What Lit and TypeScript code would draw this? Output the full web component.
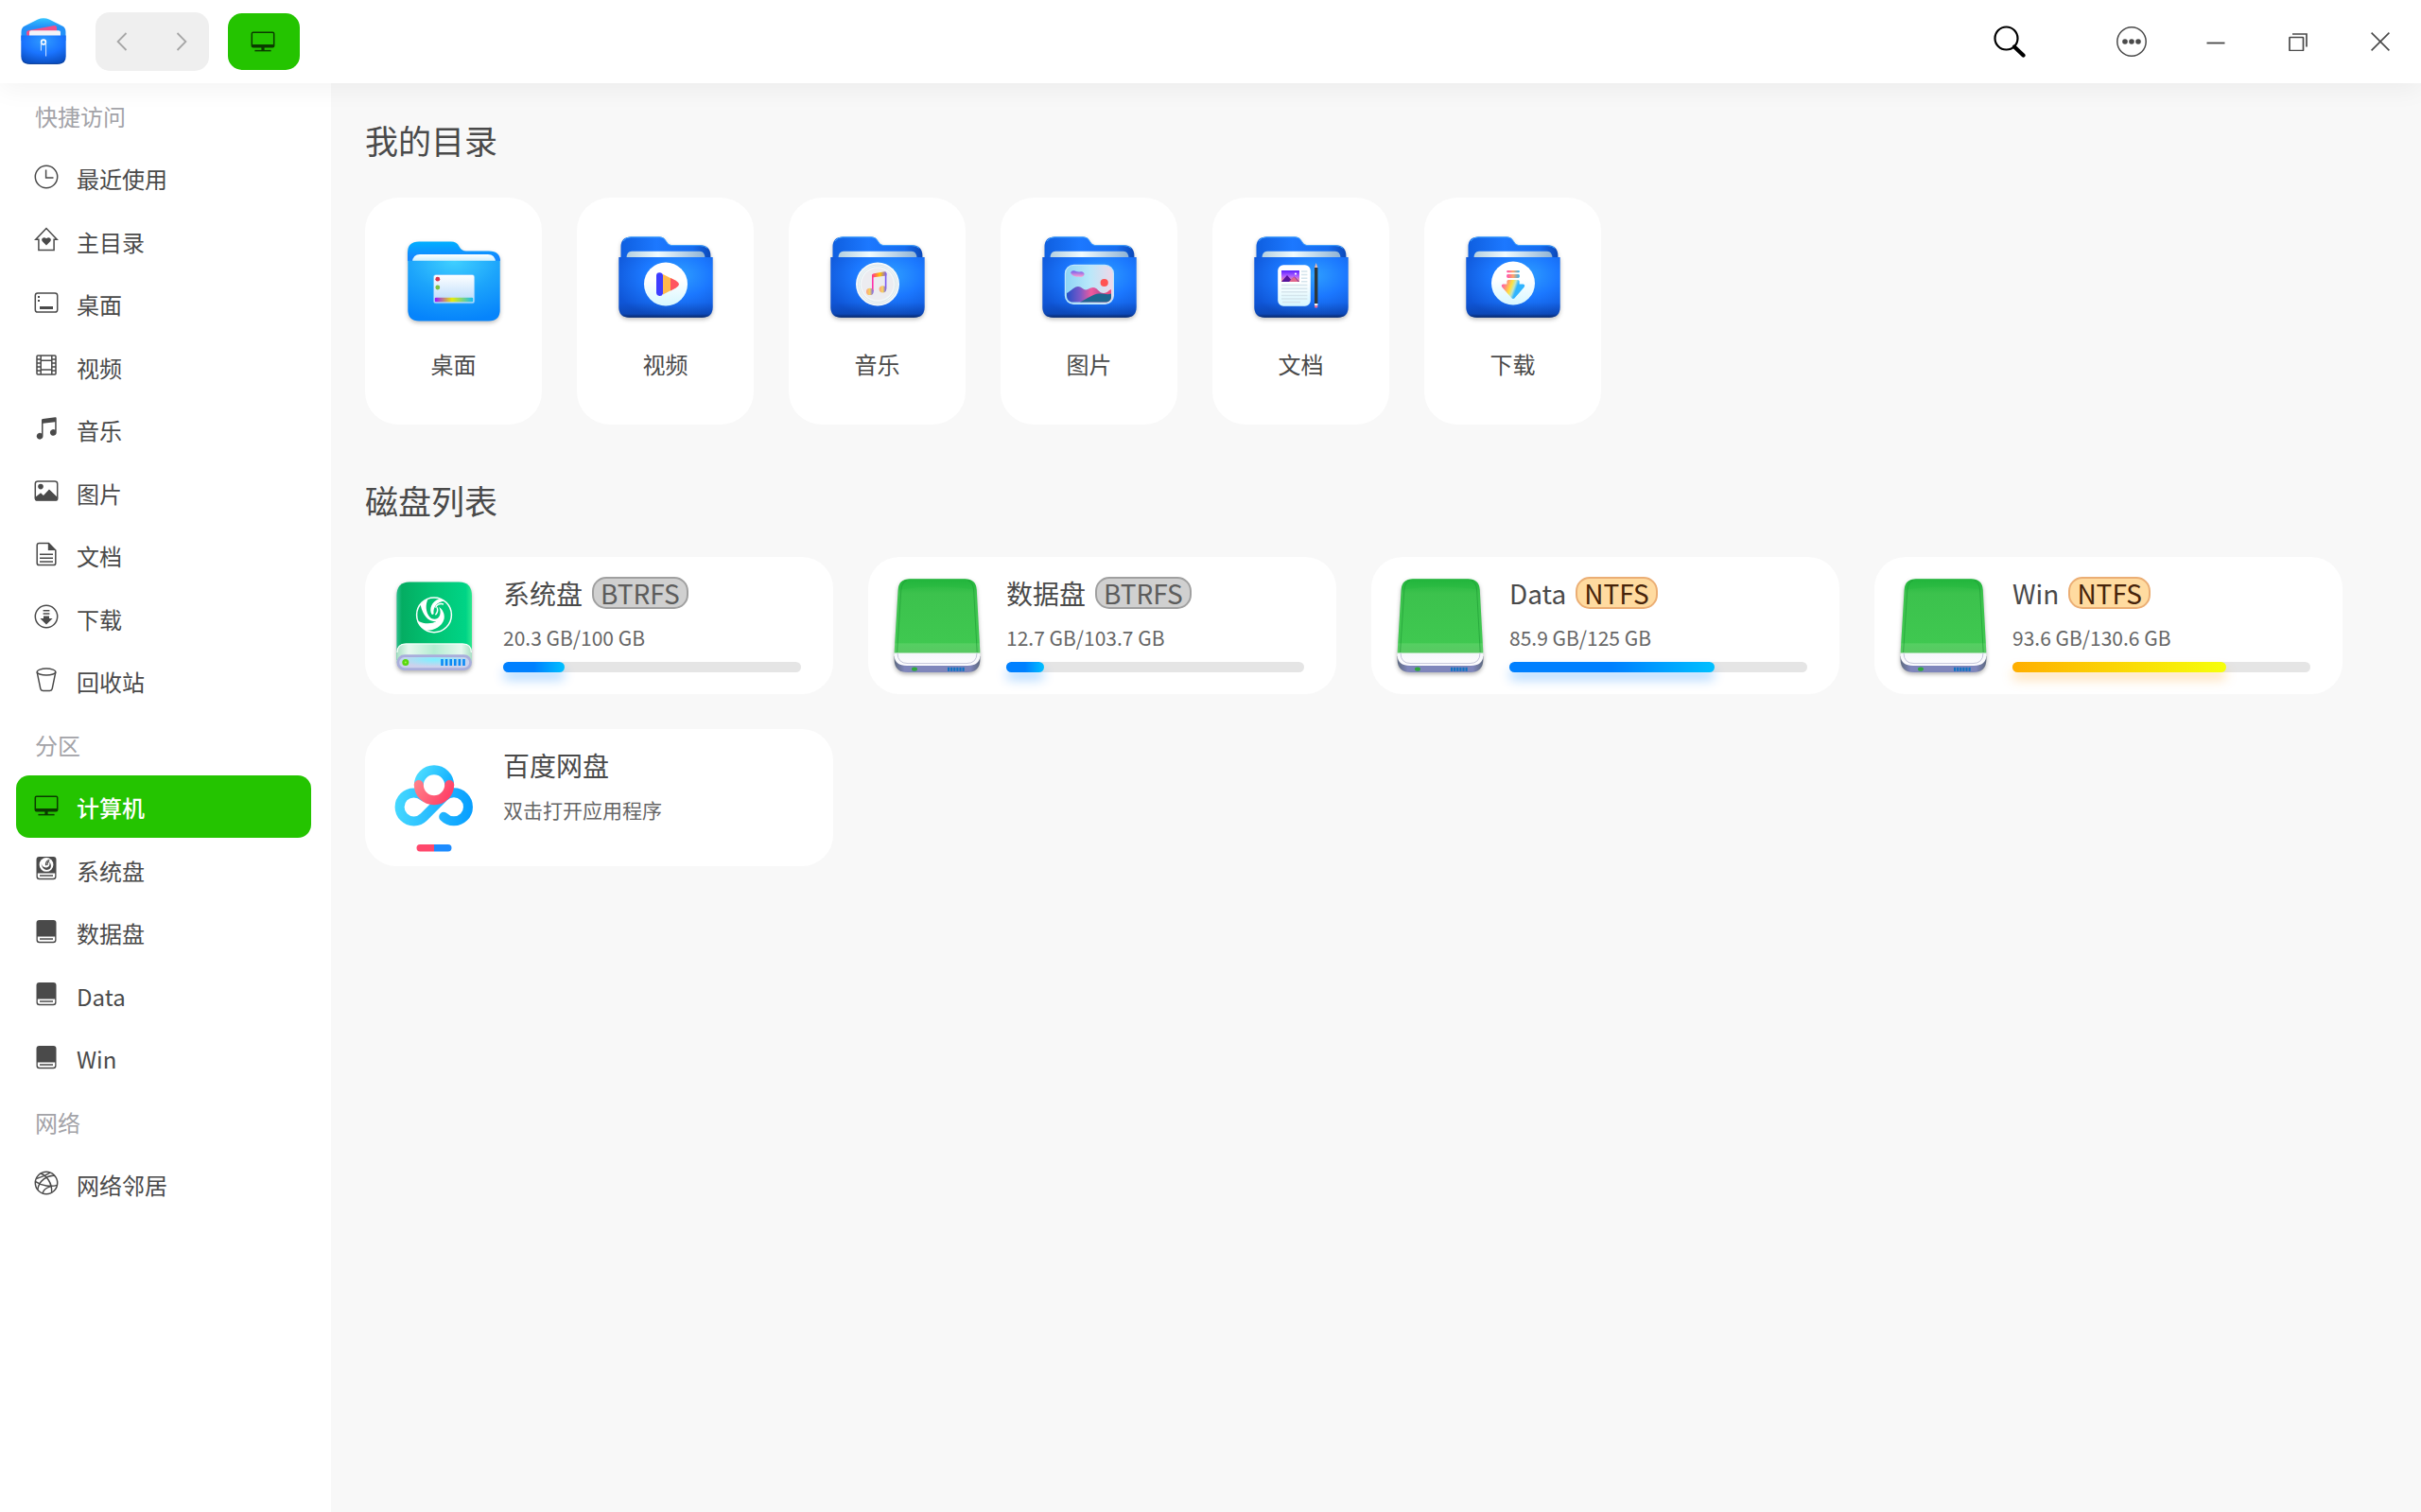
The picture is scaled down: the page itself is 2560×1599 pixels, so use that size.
import { LitElement, html, svg, css, nothing } from "lit";
import { customElement, property } from "lit/decorators.js";
import { classMap } from "lit/directives/class-map.js";
import { styleMap } from "lit/directives/style-map.js";

/* ---------- Line glyphs for the sidebar, on a 26 unit grid ---------- */

const swirl = svg`
  <path d="M6.6 6.2C6.8 10.6 9.6 13 12.4 12.8 15.4 12.6 16.6 9.6 15.6 6.8 18 9.6 18 13.4 14.8 15 11.6 16.4 7.4 14.6 6.6 6.2Z" fill="currentColor"/>
  <path d="M12.2 10.6C11.2 8.4 12.4 5.4 15.8 4.6M13.4 10.4C13.2 8.6 13.8 7 15.4 6.2" fill="none" stroke="currentColor" stroke-width="1.1"/>`;

const driveBody = svg`
  <path d="M5.5 1h15a3 3 0 0 1 3 3v18.2a3 3 0 0 1-3 3h-15a3 3 0 0 1-3-3V4a3 3 0 0 1 3-3Z" fill="currentColor"/>
  <path d="M3.8 18.4h18.4v3.4a2 2 0 0 1-2 2H5.8a2 2 0 0 1-2-2Z" fill="#fff"/>
  <path d="M6 21h14" stroke="currentColor" stroke-width="1.5"/>`;

const glyphs: Record<string, unknown> = {
  recent: svg`<circle cx="13" cy="13" r="11.7"/><path d="M12.6 5.5V14H20.5"/>`,
  home: svg`<path d="M13 1.6 1.8 13.2H4.9V24.6H21.1V13.2H24.2Z"/>
    <path d="M13 19.4 8.8 15.2C6.6 12.6 10.2 9.6 13 12.2 15.8 9.6 19.4 12.6 17.2 15.2Z" fill="currentColor" stroke="none"/>`,
  desktop: svg`<rect x="1.3" y="3" width="23.4" height="20" rx="2.6"/>
    <path d="M4 6h2v2H4ZM4 10h2v2H4ZM6 17h14v3H6Z" fill="currentColor" stroke="none"/>`,
  video: svg`<rect x="3" y="3" width="20" height="20" rx="1"/>
    <path d="M7.2 3V23M18.8 3V23M7.2 8.2H18.8M7.2 18H18.8M3 7H7.2M3 11H7.2M3 15H7.2M3 19H7.2M18.8 7H23M18.8 11H23M18.8 15H23M18.8 19H23"/>`,
  music: svg`<path d="M8 4.2C8 3.4 8.4 3 9.2 2.9L22.4 1.3C23.2 1.2 23.7 1.6 23.7 2.4V17.4A3.4 3.4 0 1 1 22.2 14.6V6.2L9.5 7.7V21.2A3.4 3.4 0 1 1 8 18.4Z" fill="currentColor" stroke="none"/>`,
  picture: svg`<rect x="1.3" y="3" width="23.4" height="20" rx="2.6"/>
    <circle cx="7" cy="8.6" r="2.8" fill="currentColor" stroke="none"/>
    <path d="M1.6 20.5 7 16.2 10 19 16 12.6 24.4 20.5V22.6H2Z" fill="currentColor"/>`,
  document: svg`<path d="M15.5 1.6H5.4A2.2 2.2 0 0 0 3.2 3.8V22.4A2.2 2.2 0 0 0 5.4 24.6H20.6A2.2 2.2 0 0 0 22.8 22.4V9Z"/>
    <path d="M14.8 1V9H23.4Z" fill="currentColor" stroke="none"/><path d="M6 13.2H20M6 17.2H20M6 21H20"/>`,
  download: svg`<circle cx="13" cy="13" r="11.7"/><path d="M9.6 6.8H16.4M9.6 10H16.4"/>
    <path d="M10 12.4H16V15H19.6L13 21.4 6.4 15H10Z" fill="currentColor" stroke="none"/>`,
  trash: svg`<ellipse cx="13" cy="4.6" rx="9.8" ry="3.5"/><path d="M3.2 4.8 6.8 22.4Q7.2 24.4 9.4 24.4H16.6Q18.8 24.4 19.2 22.4L22.8 4.8"/>`,
  computer: svg`<rect x="1.3" y="3.2" width="23.4" height="15.6" rx="1.4"/>
    <path d="M1 16H25V18.6H1ZM11.4 19H14.6V22H11.4Z" fill="currentColor" stroke="none"/><path d="M4.4 22.6H21.6"/>`,
  system: svg`<g stroke="none">${driveBody}</g><circle cx="13" cy="9.4" r="7.4" fill="#fff" stroke="none"/>
    <g stroke="none" transform="translate(.6 -.4)">${swirl}</g>`,
  drive: svg`<g stroke="none">${driveBody}</g>`,
  network: svg`<circle cx="13" cy="13" r="11.7"/>
    <path d="M7 3C13 5 19.4 13 18.6 23.2M1.6 11.6C8 16 18 17.4 24.4 15.4M22 5.4C14 4.4 5 11 3.8 20M3 8.4 11 5.4 17 2.2M9 24C9.6 21 13 18 17.6 16.6"/>`,
};

@customElement("line-glyph")
export class LineGlyph extends LitElement {
  @property() name = "";

  static styles = css`
    :host {
      display: block;
      width: 26px;
      height: 26px;
    }
    .art {
      display: block;
      width: 100%;
      height: 100%;
      overflow: visible;
    }
  `;

  render() {
    return html`<svg class="art" viewBox="0 0 26 26" fill="none" stroke="currentColor" stroke-width="1.500" aria-hidden="true">${glyphs[this.name]}</svg>`;
  }
}

/* ---------- Folder artwork, on a 112 unit grid ---------- */

const emblems: Record<string, unknown> = {
  video: svg`
    <circle cx="50" cy="50.4" r="23" fill="url(#disc)"/>
    <path d="M47 40 60.4 46.8Q64.4 50.4 60.4 54.6L47 61.4Z" fill="#ffb84d"/>
    <path d="M55 44 60.6 46.8Q67.4 50.6 60.6 54.6L55 57.4Z" fill="#ff5560"/>
    <path d="M43.4 38.2A3.6 3.6 0 0 1 47 41V60.4A3.6 3.6 0 0 1 40 59.8V41.6A3.4 3.4 0 0 1 43.4 38.2Z" fill="#3d3dff"/>`,
  music: svg`
    <circle cx="50" cy="50.6" r="23" fill="#f3f8fa"/>
    <circle cx="50" cy="50.6" r="20.6" fill="none" stroke="#cfdde2" stroke-width=".7"/>
    <circle cx="50" cy="50.6" r="18.8" fill="none" stroke="#cfdde2" stroke-width=".7"/>
    <circle cx="50" cy="50.6" r="17" fill="#ececf0"/>
    <path d="M44.8 58V40.5" stroke="#ff2fa8" stroke-width="1.6"/>
    <path d="M58.6 55.4V39" stroke="#7a5cf5" stroke-width="1.6"/>
    <path d="M44 41.6Q44 39.8 46 39.3L57.4 37.2Q59.4 37 59.4 39V41.4L44 43.6Z" fill="url(#beam)"/>
    <ellipse cx="41.8" cy="58.4" rx="3.8" ry="3.6" fill="url(#note)"/>
    <ellipse cx="55.4" cy="55.8" rx="3.8" ry="3.6" fill="url(#note)"/>`,
  picture: svg`
    <rect x="24.4" y="30.4" width="51" height="41" rx="9" fill="url(#sky)" stroke="#bfe6fb" stroke-width="1.2"/>
    <path d="M30 38.6Q31 35.4 34.6 36.4 38 38 41 37.2 44.6 37.6 44.6 40.2 43.6 43.4 38 42.6 32 43 30 38.6Z" fill="url(#cloud)"/>
    <circle cx="65.7" cy="49" r="4.1" fill="#ff5252"/>
    <path d="M26 60C30 58 34 53 38 53S44 58 48 56 54 53 57 55 61 60 65 60 70 57 73 56V65Q72 69 68 69.4H31Q26 68 26 63Z" fill="url(#hills)"/>
    <path d="M40 69.4C48 66 54 60.5 60 60.5S69 62 73 60.5V65Q72 69 68 69.4Z" fill="#1e6790"/>`,
  document: svg`
    <rect x="25.2" y="30.2" width="34.6" height="43.6" rx="6" fill="url(#disc)"/>
    <path d="M50 37H56.4M50 40.6H56.4M50 44.2H56.4M50 47.8H56.4M29 51.6H56.4M29 55.2H56.4M29 58.8H56.4M29 62.4H56.4M29 66H56.4M30 69.4H49" stroke="#d4e4ec" stroke-width="1.5"/>
    <rect x="29" y="36" width="19" height="12" fill="url(#dusk)"/>
    <path d="M29 48 35 41 39.4 46 42.6 42.6 48 48Z" fill="#57129c"/>
    <path d="M37 48 42.4 42.6 47 48Z" fill="#e0678d"/>
    <circle cx="44" cy="39.6" r="1.1" fill="#fff"/>
    <path d="M64 33 65.7 28 67.4 33Z" fill="#f2b8a6"/>
    <rect x="64" y="33" width="3.4" height="38" fill="#2e3638"/>
    <rect x="64" y="71" width="3.4" height="2" fill="#f1f1f1"/>
    <rect x="64" y="73" width="3.4" height="2.4" rx=".8" fill="#ee6f9c"/>`,
  download: svg`
    <circle cx="50" cy="49.6" r="23" fill="url(#disc)"/>
    <rect x="43.2" y="36" width="13.6" height="2.2" rx="1" fill="url(#candy)"/>
    <rect x="43.2" y="40" width="13.6" height="4" rx="1.4" fill="url(#candy)"/>
    <path d="M43.4 47.6Q43.4 46 45 46H55Q56.6 46 56.6 47.6V50.6H60.6Q63.4 51.4 61.4 54L51.6 65.2Q50 66.6 48.4 65.2L38.6 54Q36.6 51.4 39.4 50.6H43.4Z" fill="url(#arrow)"/>`,
};

@customElement("folder-art")
export class FolderArt extends LitElement {
  @property() kind = "";

  static styles = css`
    :host {
      display: block;
      width: 112px;
      height: 112px;
    }
    .art {
      display: block;
      width: 100%;
      height: 100%;
      overflow: visible;
      filter: drop-shadow(0 2px 2px rgba(0, 0, 0, 0.25));
    }
  `;

  private desktopFolder() {
    return svg`
      <defs>
        <linearGradient id="back" x2="0" y2="1"><stop stop-color="#00b0ff"/><stop offset=".8" stop-color="#1488ff"/></linearGradient>
        <radialGradient id="front" cx=".5" cy="0" r="1"><stop stop-color="#40d0ff"/><stop offset=".5" stop-color="#1ca4fb"/><stop offset="1" stop-color="#0684fb"/></radialGradient>
        <linearGradient id="paper" x2="0" y2="1"><stop stop-color="#fff"/><stop offset="1" stop-color="#c6ecfd"/></linearGradient>
        <linearGradient id="screen" x2="0" y2="1"><stop stop-color="#fff"/><stop offset="1" stop-color="#b5d9fb"/></linearGradient>
        <linearGradient id="rainbow"><stop stop-color="#9a14ff"/><stop offset=".45" stop-color="#e6ec0a"/><stop offset="1" stop-color="#12bdf5"/></linearGradient>
      </defs>
      <g transform="translate(7 15)">
        <path d="M0 21V12Q0 .4 12 .4H46Q52 .4 54.4 5.4 57 10.4 62 10.4H86Q98 10.4 98 21Z" fill="url(#back)"/>
        <path d="M5 22Q5.6 14 13 14H85Q92.4 14 93 22Z" fill="url(#paper)"/>
        <path d="M.3 20.8H97.7V72.4Q97.7 84.4 85.7 84.4H12.3Q.3 84.4 .3 72.4Z" fill="url(#front)"/>
        <rect x="27.4" y="35.4" width="43.4" height="30.4" rx="2.6" fill="url(#screen)" stroke="#5ab8fb" stroke-width=".6"/>
        <circle cx="31.8" cy="40.2" r="2.4" fill="#d8344f"/>
        <circle cx="31.8" cy="49" r="2.4" fill="#7cc043"/>
        <rect x="28.8" y="59.8" width="40.4" height="4.4" rx="1" fill="url(#rainbow)"/>
      </g>`;
  }

  private emblemFolder() {
    return svg`
      <defs>
        <linearGradient id="back"><stop stop-color="#0f5fe0"/><stop offset=".4" stop-color="#1c78ff"/><stop offset=".8" stop-color="#166cf0"/><stop offset="1" stop-color="#0b48b8"/></linearGradient>
        <radialGradient id="front" cx=".62" cy=".3" r=".72"><stop stop-color="#2fa0ff"/><stop offset=".5" stop-color="#1b78ff"/><stop offset="1" stop-color="#0f55d6"/></radialGradient>
        <linearGradient id="foot" x2="0" y2="1"><stop offset=".75" stop-color="#06286e" stop-opacity="0"/><stop offset=".94" stop-color="#06286e" stop-opacity=".3"/><stop offset="1" stop-color="#041a4a" stop-opacity=".85"/></linearGradient>
        <linearGradient id="paper"><stop stop-color="#b4cfdf"/><stop offset=".4" stop-color="#f0fbff"/><stop offset="1" stop-color="#8eb2d4"/></linearGradient>
        <linearGradient id="disc" x2="0" y2="1"><stop offset=".4" stop-color="#fff"/><stop offset="1" stop-color="#d6f7ff"/></linearGradient>
        <linearGradient id="beam"><stop stop-color="#ff2f92"/><stop offset=".55" stop-color="#ffc400"/><stop offset="1" stop-color="#7a5cf5"/></linearGradient>
        <linearGradient id="note"><stop stop-color="#ff9f80"/><stop offset=".5" stop-color="#f6d560"/><stop offset="1" stop-color="#6a58f0"/></linearGradient>
        <linearGradient id="sky"><stop stop-color="#8ed4f5"/><stop offset=".5" stop-color="#b8e8fa"/><stop offset="1" stop-color="#f0d8e8"/></linearGradient>
        <linearGradient id="cloud" x2="0" y2="1"><stop stop-color="#6a5af0"/><stop offset="1" stop-color="#ff9fd0"/></linearGradient>
        <linearGradient id="hills"><stop stop-color="#2350c8"/><stop offset=".3" stop-color="#7a58c8"/><stop offset=".55" stop-color="#f05a9c"/><stop offset=".75" stop-color="#c04c94"/><stop offset="1" stop-color="#f0507c"/></linearGradient>
        <linearGradient id="dusk" x2="0" y2="1"><stop stop-color="#5a20ff"/><stop offset=".5" stop-color="#b060ff"/><stop offset="1" stop-color="#ff9f80"/></linearGradient>
        <linearGradient id="candy"><stop stop-color="#ff4fb0"/><stop offset=".5" stop-color="#ffa56a"/><stop offset="1" stop-color="#30b0f0"/></linearGradient>
        <linearGradient id="arrow" y2=".3"><stop offset=".1" stop-color="#ff5fa8"/><stop offset=".28" stop-color="#ff9a70"/><stop offset=".46" stop-color="#ffe23d"/><stop offset=".6" stop-color="#bfe6c8"/><stop offset=".72" stop-color="#2fb4ff"/></linearGradient>
      </defs>
      <g transform="translate(6 10)">
        <path d="M2.5 30V11Q2.5 .4 13 .4H43.5Q48 .4 50 4.4 52.4 9.2 56 9.2H86Q97 9.2 97.4 20V30Z" fill="url(#back)"/>
        <path d="M5 5Q8 .8 13 .8H43.5Q48 .8 50 4.6 52.4 9.6 56 9.6H86Q91 9.6 94 12.4" fill="none" stroke="#3fa2ff" stroke-width="1"/>
        <path d="M8.4 23Q8.8 15.8 14 15.8H86Q91 15.8 91.6 23Z" fill="url(#paper)"/>
        <path d="M.3 22H99.7V74.5Q99.7 85.8 88.4 85.8H11.6Q.3 85.8 .3 74.5Z" fill="url(#front)"/>
        <path d="M.3 22H99.7V74.5Q99.7 85.8 88.4 85.8H11.6Q.3 85.8 .3 74.5Z" fill="url(#foot)"/>
        ${emblems[this.kind]}
      </g>`;
  }

  render() {
    return html`<svg class="art" viewBox="0 0 112 112" aria-hidden="true">
      ${this.kind === "desktop" ? this.desktopFolder() : this.emblemFolder()}
    </svg>`;
  }
}

/* ---------- Drive artwork, on a 112 unit grid ---------- */

@customElement("drive-art")
export class DriveArt extends LitElement {
  @property() kind = "";

  static styles = css`
    :host {
      display: block;
      width: 112px;
      height: 112px;
    }
    .art {
      display: block;
      width: 100%;
      height: 100%;
      overflow: visible;
    }
    .raised {
      filter: drop-shadow(0 2px 2px rgba(0, 0, 0, 0.3));
    }
  `;

  private system() {
    const vents = [0, 1, 2, 3, 4, 5];
    return svg`
      <defs>
        <linearGradient id="shell"><stop stop-color="#2abf8c"/><stop offset=".07" stop-color="#04ad62"/><stop offset=".5" stop-color="#02c474"/><stop offset=".92" stop-color="#00d486"/><stop offset="1" stop-color="#2ee88e"/></linearGradient>
        <linearGradient id="lip"><stop stop-color="#a8e0c4"/><stop offset=".16" stop-color="#e6f8ef"/><stop offset=".5" stop-color="#b4edd2"/><stop offset=".86" stop-color="#e6f8ef"/><stop offset="1" stop-color="#a8e0c4"/></linearGradient>
        <radialGradient id="tray" cy=".3"><stop stop-color="#7ff0ff"/><stop offset="1" stop-color="#ccd2ec"/></radialGradient>
      </defs>
      <g class="raised">
        <path d="M16.4 24Q16.4 9.4 30 9.4H82.4Q96 9.4 96 24V92H16.4Z" fill="url(#shell)"/>
        <path d="M16.4 95V84Q16.4 74.4 26.4 74.4H86Q96 74.4 96 84V95Z" fill="url(#lip)"/>
        <path d="M17 84Q17 75 26.4 75H86Q95.4 75 95.4 84" fill="none" stroke="#f4fff9" stroke-width="1.2"/>
        <rect x="17.8" y="87.600" width="76.800" height="14" rx="7" fill="url(#tray)" stroke="#a9aedb" stroke-width="2.800"/>
      </g>
      <circle cx="25.8" cy="94.4" r="3.5" fill="#58d80e"/>
      <circle cx="25.8" cy="94.4" r="1" fill="#a8f05a"/>
      ${vents.map((i) => svg`<rect x=${63.2 + i * 4.6} y="91" width="2.6" height="7" fill="#0a8af5"/>`)}
      <circle cx="56" cy="44.3" r="18.4" fill="none" stroke="#fff" stroke-width="1.5"/>
      <path d="M41.6 33.6C43.4 31.4 46.4 28.8 49.6 27.6 46.6 33.4 47 41.6 51.4 46.6 55 50.4 60.8 49.2 62.2 44.2 63 41.4 62.6 38.6 61.2 36 65.2 38.6 67.6 43.6 66.6 48.6 64.4 57 56 60.8 48.6 60.8 42.4 58.6 39.2 54 38.6 50.4 46 54.4 54 53.8 58.2 51 51.6 52.2 44.4 46.8 41.6 33.6Z" fill="#fff"/>
      <path d="M53.4 43.6C50.6 38 53 30.2 61.6 27.2L66.8 29.6C58.6 31 54.8 36.4 55.6 43 54.8 44 54 44.2 53.4 43.6Z" fill="#fff"/>
      <path d="M57.4 44.2C59.6 42 60 38.8 59.2 36.4M66 33C62 31.6 58.6 33.6 57.6 36.6" fill="none" stroke="#fff" stroke-width="1.4"/>`;
  }

  private external() {
    const vents = [0, 1, 2, 3, 4, 5];
    return svg`
      <defs>
        <linearGradient id="shell" x2="0" y2="1"><stop stop-color="#22b53c"/><stop offset=".2" stop-color="#3cc24d"/><stop offset=".86" stop-color="#3fc850"/><stop offset=".88" stop-color="#55cf62"/><stop offset="1" stop-color="#58c862"/></linearGradient>
        <linearGradient id="cap" x2="0" y2="1"><stop stop-color="#22b53c"/><stop offset="1" stop-color="#2fbd45"/></linearGradient>
        <linearGradient id="base"><stop stop-color="#5e6a80"/><stop offset=".12" stop-color="#7f86bb"/><stop offset=".88" stop-color="#7f86bb"/><stop offset="1" stop-color="#5e6a80"/></linearGradient>
        <linearGradient id="face" x2="0" y2="1"><stop stop-color="#f4f6fa"/><stop offset="1" stop-color="#fdfdff"/></linearGradient>
      </defs>
      <g class="raised">
        <path d="M10.6 88H101.4V92Q101 105 87 105H25Q11 105 10.6 92Z" fill="url(#base)"/>
        <path d="M10.6 83H101.4V87Q101 98 88 98H24Q11 98 10.6 87Z" fill="url(#face)"/>
        <path d="M10.6 84.4 14.6 18Q15.2 6.2 27 6.2H85.4Q97.2 6.2 97.8 18L101.4 84.4Z" fill="url(#shell)"/>
      </g>
      <path d="M15.2 18Q16 6.8 27 6.8H85.4Q96.4 6.8 97.2 18C70 13.4 42 13.4 15.2 18Z" fill="url(#cap)"/>
      <path d="M13.6 84 17.8 18Q18.4 10 24 7.6M98.2 84 94.6 18Q94 10 88.4 7.6" fill="none" stroke="#1d9a34" stroke-opacity=".6" stroke-width="1"/>
      <path d="M14 84.4Q14 95.6 25 95.6H87Q98 95.6 98 84.4" fill="none" stroke="#c4c6da" stroke-width="1"/>
      <ellipse cx="32" cy="101.6" rx="3" ry="2.2" fill="#2fa83c"/>
      ${vents.map((i) => svg`<rect x=${67 + i * 3.1} y="99.8" width="2.2" height="4" fill="#1172c4"/>`)}`;
  }

  private netdisk() {
    return svg`
      <defs>
        <linearGradient id="loop" gradientUnits="userSpaceOnUse" x1="15" y1="60" x2="97" y2="66"><stop stop-color="#44d8ff"/><stop offset=".5" stop-color="#26baff"/><stop offset="1" stop-color="#069eff"/></linearGradient>
        <linearGradient id="crown" gradientUnits="userSpaceOnUse" x1="40" y1="26" x2="74" y2="46"><stop stop-color="#4cdcff"/><stop offset="1" stop-color="#0cacff"/></linearGradient>
        <linearGradient id="smile" gradientUnits="userSpaceOnUse" x1="38" y1="40" x2="68" y2="58"><stop stop-color="#ff7e88"/><stop offset="1" stop-color="#ff4469"/></linearGradient>
      </defs>
      <g fill="none" stroke-width="10" stroke-linecap="round">
        <path d="M66.2 75.8A15 15 0 1 0 66.3 54.8L45.2 76A15 15 0 1 1 45.2 54.8" stroke="url(#loop)"/>
        <path d="M39.8 42.4A16.2 16.2 0 0 1 72.2 42.4" stroke="url(#crown)" stroke-linecap="butt"/>
        <path d="M39.8 42A16.2 16.2 0 0 0 72.2 42" stroke="url(#smile)"/>
      </g>
      <path d="M56 105H41.2A3.7 3.7 0 0 0 41.2 112.4H56Z" fill="#ff486c"/>
      <path d="M56 105H70.8A3.7 3.7 0 0 1 70.8 112.4H56Z" fill="#1e8cff"/>`;
  }

  render() {
    const art =
      this.kind === "system" ? this.system() : this.kind === "netdisk" ? this.netdisk() : this.external();
    return html`<svg class="art" viewBox="0 0 112 112" aria-hidden="true">${art}</svg>`;
  }
}

/* ---------- Application shell ---------- */

interface Place {
  label: string;
  glyph?: string;
  current?: boolean;
}

interface Disk {
  name: string;
  art: string;
  detail: string;
  system?: string;
  percent?: number;
  warm?: boolean;
}

const places: Place[] = [
  { label: "快捷访问" },
  { label: "最近使用", glyph: "recent" },
  { label: "主目录", glyph: "home" },
  { label: "桌面", glyph: "desktop" },
  { label: "视频", glyph: "video" },
  { label: "音乐", glyph: "music" },
  { label: "图片", glyph: "picture" },
  { label: "文档", glyph: "document" },
  { label: "下载", glyph: "download" },
  { label: "回收站", glyph: "trash" },
  { label: "分区" },
  { label: "计算机", glyph: "computer", current: true },
  { label: "系统盘", glyph: "system" },
  { label: "数据盘", glyph: "drive" },
  { label: "Data", glyph: "drive" },
  { label: "Win", glyph: "drive" },
  { label: "网络" },
  { label: "网络邻居", glyph: "network" },
];

const folders = [
  { label: "桌面", kind: "desktop" },
  { label: "视频", kind: "video" },
  { label: "音乐", kind: "music" },
  { label: "图片", kind: "picture" },
  { label: "文档", kind: "document" },
  { label: "下载", kind: "download" },
];

const disks: Disk[] = [
  { name: "系统盘", art: "system", system: "BTRFS", detail: "20.3 GB/100 GB", percent: 20.6 },
  { name: "数据盘", art: "external", system: "BTRFS", detail: "12.7 GB/103.7 GB", percent: 12.7 },
  { name: "Data", art: "external", system: "NTFS", detail: "85.9 GB/125 GB", percent: 68.8 },
  { name: "Win", art: "external", system: "NTFS", detail: "93.6 GB/130.6 GB", percent: 71.8, warm: true },
  { name: "百度网盘", art: "netdisk", detail: "双击打开应用程序" },
];

@customElement("app-root")
export class AppRoot extends LitElement {
  static styles = css`
    :host {
      display: flex;
      flex-direction: column;
      min-height: 100vh;
      background: #f8f8f8;
      color: #4a4a4a;
      font-family: "Noto Sans CJK SC", "Noto Sans", sans-serif;
      font-size: 24px;
      line-height: 36px;
    }
    * {
      box-sizing: border-box;
    }
    button {
      display: flex;
      align-items: center;
      justify-content: center;
      padding: 0;
      border: 0;
      background: none;
      color: inherit;
      font: inherit;
      cursor: pointer;
    }
    a {
      color: inherit;
      text-decoration: none;
    }
    ul {
      margin: 0;
      padding: 0;
      list-style: none;
    }
    .titlebar {
      position: relative;
      z-index: 1;
      display: flex;
      align-items: center;
      height: 88px;
      padding-left: 22px;
      background: #fff;
      box-shadow: 0 6px 26px rgba(0, 0, 0, 0.05);
    }
    .logo {
      width: 48px;
      height: 50px;
      margin-right: 31px;
      overflow: visible;
    }
    .history {
      display: flex;
      justify-content: space-between;
      width: 120px;
      height: 62px;
      margin-right: 20px;
      padding-right: 2px;
      border-radius: 15px;
      background: #efefef;
    }
    .history button {
      width: 55px;
      color: #a6a6a6;
    }
    .crumb {
      width: 76px;
      height: 60px;
      margin-right: auto;
      padding-right: 2px;
      border-radius: 15px;
      background: #24c400;
      color: #0b3b00;
    }
    .search {
      width: 60px;
      height: 88px;
      margin-right: 54px;
      color: #000;
    }
    .menu {
      width: 90px;
      height: 88px;
    }
    .control {
      width: 87px;
      height: 88px;
    }
    .body {
      display: flex;
      flex: 1;
    }
    .sidebar {
      width: 350px;
      padding: 0 21px 0 17px;
      background: #fff;
    }
    .places {
      display: grid;
      grid-auto-rows: 1fr;
      height: 1197px;
    }
    .heading,
    .place {
      display: flex;
      align-items: center;
      padding: 0 0 2px 19px;
    }
    .heading {
      padding-left: 20px;
      color: #a3a3a8;
    }
    .place {
      gap: 19px;
      height: 100%;
      border-radius: 14px;
    }
    .label {
      padding-top: 5px;
    }
    .current {
      background: #24c400;
      color: #0b3b00;
    }
    .current .label {
      color: #fff;
      font-weight: 500;
    }
    .content {
      flex: 1;
      min-width: 0;
      padding: 36px;
    }
    .title {
      margin: 0;
      font-size: 35px;
      font-weight: 400;
      line-height: 48px;
    }
    .folders {
      display: flex;
      flex-wrap: wrap;
      gap: 37px;
      margin: 37px 0 56px;
    }
    .folder {
      display: flex;
      flex-direction: column;
      align-items: center;
      gap: 15px;
      width: 187px;
      height: 240px;
      padding-top: 31px;
      border-radius: 35px;
      background: #fff;
    }
    .disks {
      display: grid;
      grid-template-columns: repeat(auto-fill, 495px);
      gap: 37px;
      margin-top: 36px;
    }
    .disk {
      display: flex;
      align-items: center;
      gap: 17px;
      height: 145px;
      padding: 0 34px 0 17px;
      border-radius: 33px;
      background: #fff;
    }
    .info {
      display: flex;
      flex: 1;
      flex-direction: column;
      height: 100%;
      padding-top: 18px;
    }
    .name {
      display: flex;
      align-items: center;
      gap: 10px;
      margin-bottom: 12px;
      font-size: 28px;
      line-height: 40px;
    }
    .tag {
      padding: 0 7px;
      border: 2px solid #a0a0a0;
      border-radius: 15px;
      background: #d0d0d0;
      color: #5c5c5c;
      line-height: 30px;
    }
    .ntfs {
      border-color: #ebae74;
      background: #ffdba0;
      color: #46230a;
    }
    .detail {
      color: #666;
      font-size: 21px;
      line-height: 30px;
    }
    .track {
      height: 11px;
      margin-top: 11px;
      border-radius: 6px;
      background: #e5e5e5;
    }
    .fill {
      height: 100%;
      border-radius: 6px;
      background: linear-gradient(90deg, #0080ff 50%, #00c0ff);
      box-shadow: 0 8px 12px rgba(0, 128, 255, 0.3);
    }
    .warm {
      background: linear-gradient(90deg, #ffae00, #f6ff0a);
      box-shadow: 0 8px 12px rgba(255, 174, 60, 0.35);
    }
  `;

  private titlebar() {
    return html`<header class="titlebar">
      <svg class="logo" viewBox="0 0 48 50" role="img" aria-label="文件管理器">
        <defs>
          <linearGradient id="flap" x2="0" y2="1"><stop stop-color="#35c4ff"/><stop offset=".4" stop-color="#2390f8"/></linearGradient>
          <radialGradient id="pouch" cx=".5" cy=".2" r=".8"><stop stop-color="#2f9bff"/><stop offset=".55" stop-color="#1a74ff"/><stop offset="1" stop-color="#0b50c4"/></radialGradient>
        </defs>
        <path d="M.5 24V15Q.5 10 4 8.5L18 1.5Q24-1 30 1.5L44 8.5Q47.5 10 47.5 15V24Z" fill="url(#flap)"/>
        <path d="M6 15.5Q6 13.5 8 13.2L35.5 8Q37.5 7.6 38 10L38.5 20H6.5Z" fill="#f0508a"/>
        <path d="M9 20V15Q9 13.2 11 13.2H40Q42 13.2 42 15V20Z" fill="#f3f3f8"/>
        <path d="M.3 18.6H47.7V40.5Q47.7 48.6 39.6 48.6H8.4Q.3 48.6 .3 40.5Z" fill="url(#pouch)"/>
        <path d="M2 45Q4.5 48.4 8.4 48.4H39.6Q43.5 48.4 46 45" fill="none" stroke="#083c96" stroke-width="1"/>
        <circle cx="24" cy="25.5" r="2.4" fill="none" stroke="#fff" stroke-width="1.6"/>
        <path d="M26.6 26V40.5M21.4 26V34.5" stroke="#d4e6ff" stroke-width="1"/>
      </svg>
      <nav class="history" aria-label="历史">
        <button aria-label="后退"><svg width="12" height="20" viewBox="0 0 12 20" fill="none" stroke="currentColor" stroke-width="1.8"><path d="M10.5 1 1.6 10 10.5 19"/></svg></button>
        <button aria-label="前进"><svg width="12" height="20" viewBox="0 0 12 20" fill="none" stroke="currentColor" stroke-width="1.8"><path d="M1.5 1 10.4 10 1.5 19"/></svg></button>
      </nav>
      <button class="crumb" aria-label="计算机"><line-glyph name="computer"></line-glyph></button>
      <button class="search" aria-label="搜索">
        <svg width="34" height="34" viewBox="0 0 34 34" fill="none" stroke="currentColor"><circle cx="13.5" cy="13.5" r="12" stroke-width="2.2"/><path d="M22 22.5 31.5 31.5" stroke-width="4.2" stroke-linecap="round"/></svg>
      </button>
      <button class="menu" aria-label="菜单">
        <svg width="32" height="32" viewBox="0 0 32 32" fill="currentColor"><circle cx="16" cy="16" r="15.2" fill="none" stroke="currentColor" stroke-width="1.5"/><circle cx="9" cy="16" r="2.8"/><circle cx="16" cy="16" r="2.8"/><circle cx="23" cy="16" r="2.8"/></svg>
      </button>
      <button class="control" aria-label="最小化">
        <svg width="20" height="20" viewBox="0 0 20 20" stroke="currentColor" stroke-width="1.8"><path d="M.5 11.5H19.5"/></svg>
      </button>
      <button class="control" aria-label="还原">
        <svg width="20" height="20" viewBox="0 -1 20 20" fill="none" stroke="currentColor" stroke-width="1.7"><rect x="1" y="4.5" width="14.5" height="14" rx=".5"/><path d="M4 1H19V14.5"/></svg>
      </button>
      <button class="control" aria-label="关闭">
        <svg width="20" height="20" viewBox="0 0 20 20" stroke="currentColor" stroke-width="1.6"><path d="M.6.6 19.4 19.4M19.4.6.6 19.4"/></svg>
      </button>
    </header>`;
  }

  private place(p: Place) {
    if (!p.glyph) {
      return html`<li class="heading"><span class="label">${p.label}</span></li>`;
    }
    return html`<li>
      <a class=${classMap({ place: true, current: !!p.current })} href="#" aria-current=${p.current ? "page" : nothing}>
        <line-glyph name=${p.glyph}></line-glyph><span class="label">${p.label}</span>
      </a>
    </li>`;
  }

  private disk(d: Disk) {
    return html`<li>
      <a class="disk" href="#">
        <drive-art kind=${d.art}></drive-art>
        <div class="info">
          <div class="name">
            <span>${d.name}</span>
            ${d.system
              ? html`<span class=${classMap({ tag: true, ntfs: d.system === "NTFS" })}>${d.system}</span>`
              : nothing}
          </div>
          <div class="detail">${d.detail}</div>
          ${d.percent !== undefined
            ? html`<div class="track" role="progressbar" aria-label=${d.name} aria-valuenow=${d.percent}>
                <div class=${classMap({ fill: true, warm: !!d.warm })} style=${styleMap({ width: `${d.percent}%` })}></div>
              </div>`
            : nothing}
        </div>
      </a>
    </li>`;
  }

  render() {
    return html`
      ${this.titlebar()}
      <div class="body">
        <nav class="sidebar" aria-label="位置">
          <ul class="places">${places.map((p) => this.place(p))}</ul>
        </nav>
        <main class="content">
          <h2 class="title">我的目录</h2>
          <ul class="folders">
            ${folders.map(
              (f) => html`<li><a class="folder" href="#"><folder-art kind=${f.kind}></folder-art><span>${f.label}</span></a></li>`,
            )}
          </ul>
          <h2 class="title">磁盘列表</h2>
          <ul class="disks">${disks.map((d) => this.disk(d))}</ul>
        </main>
      </div>
    `;
  }
}
